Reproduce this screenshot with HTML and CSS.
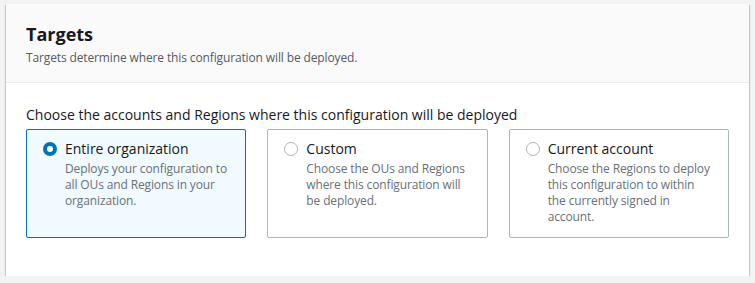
FILE: index.html
```html
<!DOCTYPE html>
<html>
<head>
<meta charset="utf-8">
<link rel="stylesheet" href="styles.css">
</head>
<body>
<div class="container">
  <div class="header">
    <h2 class="title">Targets</h2>
    <p class="subtitle">Targets determine where this configuration will be deployed.</p>
  </div>
  <div class="content">
    <div class="label">Choose the accounts and Regions where this configuration will be deployed</div>
    <div class="tiles">
      <div class="tile selected">
        <span class="radio checked"></span>
        <div class="tile-text">
          <div class="tile-title">Entire organization</div>
          <div class="tile-desc">Deploys your configuration to all OUs and Regions in your organization.</div>
        </div>
      </div>
      <div class="tile">
        <span class="radio"></span>
        <div class="tile-text">
          <div class="tile-title">Custom</div>
          <div class="tile-desc">Choose the OUs and Regions where this configuration will be deployed.</div>
        </div>
      </div>
      <div class="tile">
        <span class="radio"></span>
        <div class="tile-text">
          <div class="tile-title">Current account</div>
          <div class="tile-desc">Choose the Regions to deploy this configuration to within the currently signed in account.</div>
        </div>
      </div>
    </div>
  </div>
</div>
</body>
</html>
```
FILE: styles.css
```css
html, body {
  margin: 0;
  padding: 0;
  background: #f2f3f3;
  font-family: "Open Sans", "Noto Sans", sans-serif;
  color: #16191f;
}
body {
  padding: 4px 6px 0 6px;
}
.container {
  background: #ffffff;
  box-shadow: 0 1px 1px 0 rgba(0,28,36,0.3), 1px 1px 1px 0 rgba(0,28,36,0.15), -1px 1px 1px 0 rgba(0,28,36,0.15);
  height: 272px;
  box-sizing: border-box;
}
.header {
  background: #fafafa;
  border-bottom: 1px solid #eaeded;
  padding: 19px 20px 0 20px;
  height: 79px;
  box-sizing: border-box;
}
.title {
  margin: 0;
  font-size: 18px;
  font-weight: 700;
  line-height: 22px;
}
.subtitle {
  margin: 5px 0 0 0;
  font-size: 12px;
  line-height: 16px;
  color: #545b64;
  letter-spacing: -0.13px;
}
.content {
  padding: 22px 20px 0 20px;
}
.label {
  font-size: 14px;
  line-height: 20px;
  margin-bottom: 4px;
}
.tiles {
  display: grid;
  grid-template-columns: repeat(3, 1fr);
  column-gap: 21px;
}
.tile {
  border: 1px solid #aab7b8;
  border-radius: 2px;
  height: 109px;
  box-sizing: border-box;
  display: flex;
  align-items: flex-start;
  padding: 9px 14px 0 16px;
}
.tile.selected {
  border-color: #0073bb;
  background: #f1faff;
}
.radio {
  width: 14px;
  height: 14px;
  border-radius: 50%;
  border: 1px solid #aab7b8;
  box-sizing: border-box;
  background: #fff;
  margin-top: 3px;
  margin-right: 8px;
  flex: none;
}
.radio.checked {
  border: 4px solid #0073bb;
}
.tile-title {
  font-size: 14px;
  line-height: 20px;
}
.tile-desc {
  margin-top: 2px;
  font-size: 12px;
  line-height: 16px;
  color: #687078;
  letter-spacing: -0.13px;
}
```
